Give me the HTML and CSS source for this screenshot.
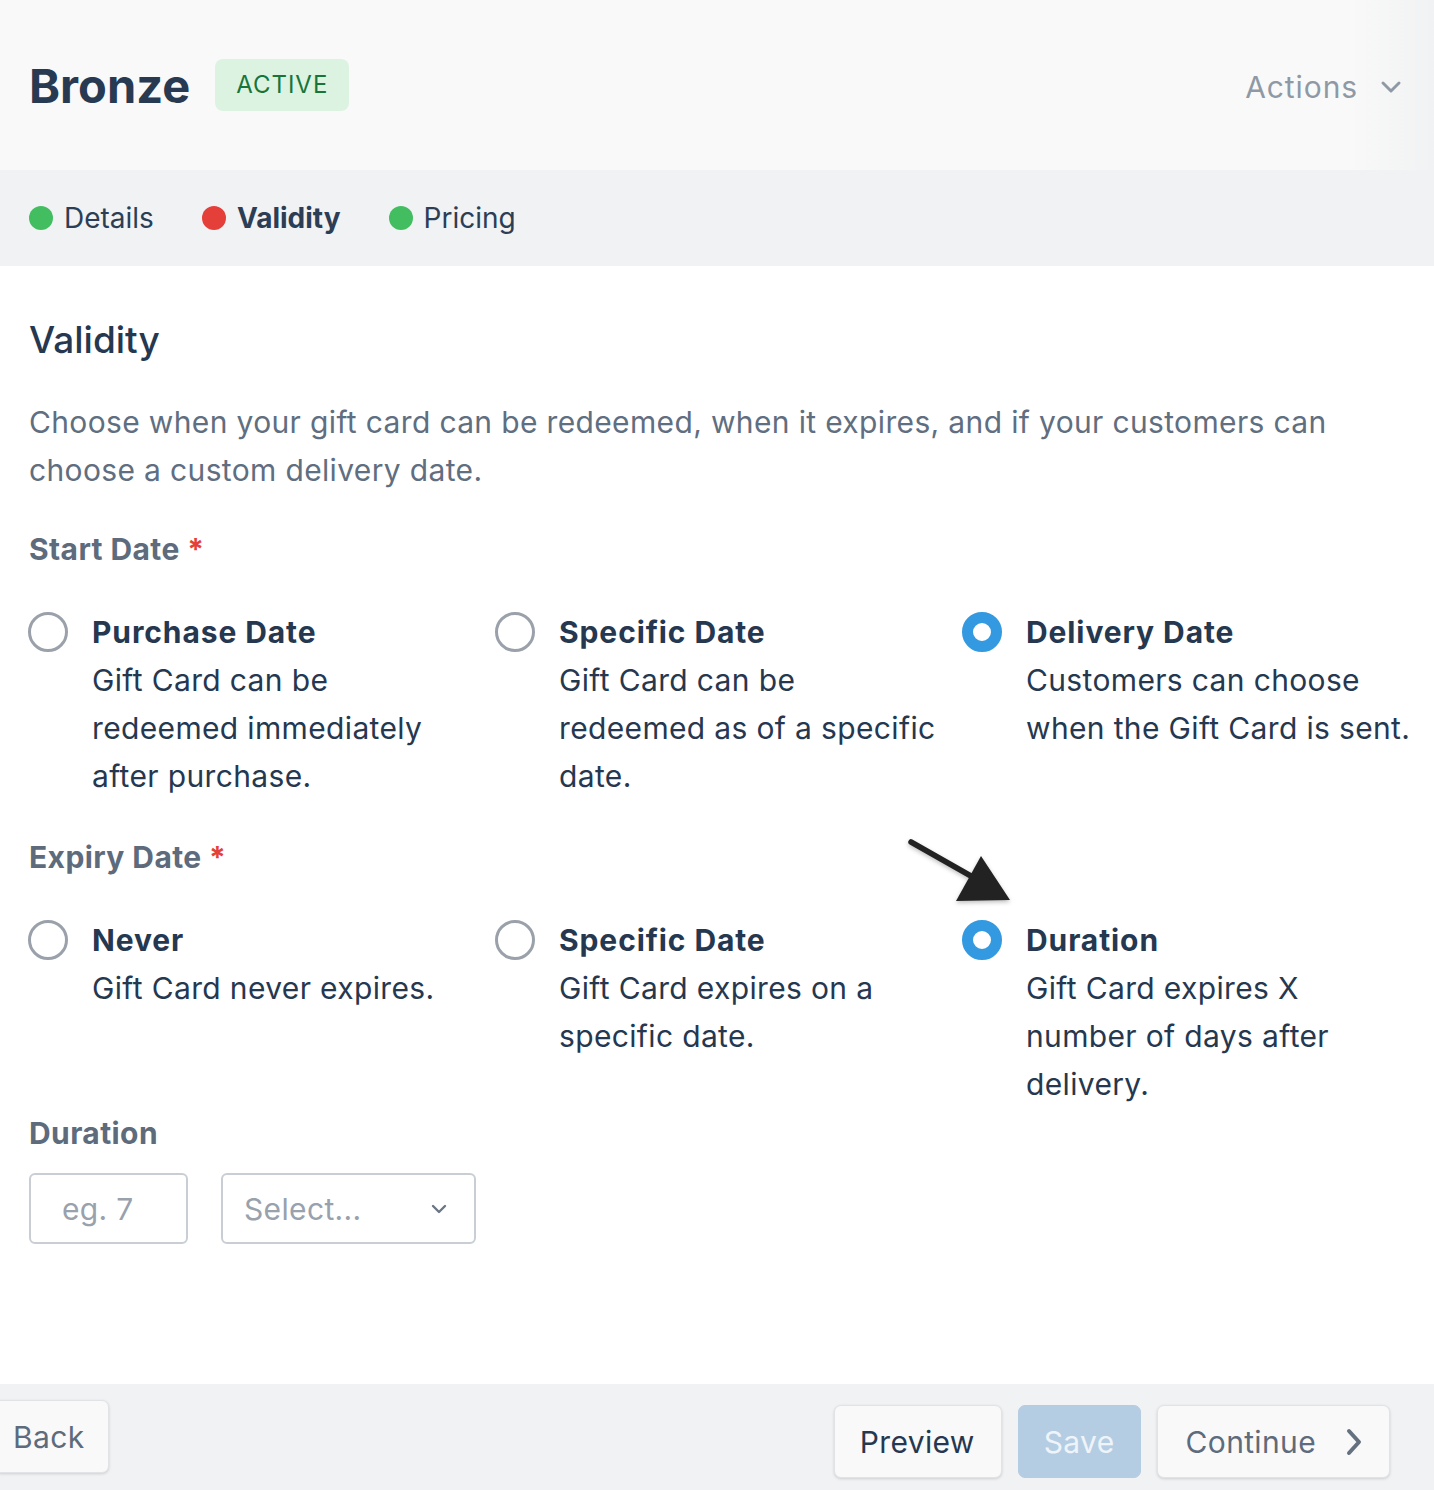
FILE: index.html
```html
<!DOCTYPE html>
<html lang="en">
<head>
  <meta charset="UTF-8" />
  <meta name="viewport" content="width=device-width, initial-scale=1.0" />
  <title>Bronze - Validity</title>
  <link rel="stylesheet" href="styles.css">
</head>
<body>
  <header class="page-header">
    <div class="title-group">
      <h1>Bronze</h1>
      <span class="badge">ACTIVE</span>
    </div>
    <button class="actions">Actions
      <svg width="22" height="14" viewBox="0 0 22 14"><path d="M3 3l8 8 8-8" fill="none" stroke="#8f99a6" stroke-width="3" stroke-linecap="round" stroke-linejoin="round"/></svg>
    </button>
  </header>

  <nav class="steps">
    <span class="step"><i class="dot green"></i>Details</span>
    <span class="step current"><i class="dot red"></i>Validity</span>
    <span class="step"><i class="dot green"></i>Pricing</span>
  </nav>

  <main class="content">
    <h2>Validity</h2>
    <p class="intro">Choose when your gift card can be redeemed, when it expires, and if your customers can choose a custom delivery date.</p>

    <h3 class="label">Start Date <span class="req">*</span></h3>
    <div class="options">
      <label class="option">
        <span class="radio"></span>
        <span class="option-text"><b>Purchase Date</b>Gift Card can be redeemed immediately after purchase.</span>
      </label>
      <label class="option">
        <span class="radio"></span>
        <span class="option-text"><b>Specific Date</b>Gift Card can be redeemed as of a specific date.</span>
      </label>
      <label class="option">
        <span class="radio checked"></span>
        <span class="option-text"><b>Delivery Date</b>Customers can choose when the Gift Card is sent.</span>
      </label>
    </div>

    <h3 class="label">Expiry Date <span class="req">*</span></h3>
    <div class="options">
      <label class="option">
        <span class="radio"></span>
        <span class="option-text"><b>Never</b>Gift Card never expires.</span>
      </label>
      <label class="option">
        <span class="radio"></span>
        <span class="option-text"><b>Specific Date</b>Gift Card expires on a specific date.</span>
      </label>
      <label class="option">
        <span class="radio checked"></span>
        <span class="option-text"><b>Duration</b>Gift Card expires X number of days after delivery.</span>
      </label>
    </div>

    <h3 class="label duration-label">Duration</h3>
    <div class="duration-row">
      <div class="field num">eg. 7</div>
      <div class="field select">Select...
        <svg width="18" height="12" viewBox="0 0 18 12"><path d="M3 3l6 6 6-6" fill="none" stroke="#6b7685" stroke-width="2.4" stroke-linecap="round" stroke-linejoin="round"/></svg>
      </div>
    </div>

    <!-- callout arrow pointing at the Duration option -->
    <svg class="pointer" width="120" height="80" viewBox="0 0 120 80">
      <line x1="5" y1="6" x2="72" y2="44" stroke="#222" stroke-width="5.5" stroke-linecap="round"/>
      <polygon points="104,64 50,65 75,20" fill="#222"/>
    </svg>
  </main>

  <footer class="footer">
    <button class="btn back">Back</button>
    <div class="footer-right">
      <button class="btn preview">Preview</button>
      <button class="btn save">Save</button>
      <button class="btn muted">Continue
        <svg width="20" height="30" viewBox="0 0 20 30"><path d="M5 4l10 11-10 11" fill="none" stroke="#667180" stroke-width="4" stroke-linecap="round" stroke-linejoin="round"/></svg>
      </button>
    </div>
  </footer>
</body>
</html>
```

FILE: styles.css
```css
* { box-sizing: border-box; }
body { margin: 0; height: 1490px; display: flex; flex-direction: column; font-family: Inter, "Noto Sans", sans-serif; letter-spacing: 0.35px; color: #263850; background: #fff; overflow: hidden; }
button { font-family: inherit; letter-spacing: inherit; cursor: pointer; }

.page-header { height: 170px; flex: none; display: flex; align-items: center; justify-content: space-between; padding: 0 32px 0 29px; background: linear-gradient(to right, #f9f9f9 94%, #f1f2f3); }
.title-group { display: flex; align-items: center; gap: 25px; }
h1 { margin: 0; font-size: 47px; font-weight: 700; color: #283a51; letter-spacing: 0; }
.badge { background: #dcf3e2; color: #17753a; font-size: 24px; letter-spacing: 1px; padding: 12px 21px; border-radius: 8px; line-height: 28px; }
.actions { background: none; border: 0; color: #8f99a6; font-size: 30px; display: flex; align-items: center; gap: 22px; padding: 0; margin-top: 3px; letter-spacing: 0.9px; }

.steps { height: 96px; flex: none; background: #f1f2f4; display: flex; align-items: center; gap: 48px; padding: 0 29px; font-size: 28px; color: #2c3e55; letter-spacing: 0; }
.step { display: flex; align-items: center; gap: 11px; }
.step.current { font-weight: 700; }
.dot { width: 24px; height: 24px; border-radius: 50%; display: inline-block; }
.dot.green { background: #42be60; }
.dot.red { background: #e53f3a; }

.content { flex: 1; position: relative; padding: 52px 10px 0 29px; }
h2 { margin: 0; font-size: 37px; font-weight: 500; line-height: 44px; color: #263850; letter-spacing: 0; }
.intro { margin: 36px 0 0; font-size: 30px; line-height: 48px; color: #5f6e80; max-width: 1340px; }
.label { margin: 35px 0 0; font-size: 30px; font-weight: 700; line-height: 40px; color: #5d6b7c; letter-spacing: 0.4px; }
.req { color: #e53f3a; }

.options { display: grid; grid-template-columns: 467px 467px 1fr; margin-top: 39px; }
.option { display: flex; gap: 24px; font-size: 30px; line-height: 48px; color: #263850; }
.option-text { max-width: 386px; }
.option-text b { display: block; font-weight: 700; letter-spacing: 0.9px; }
.radio { flex: none; width: 40px; height: 40px; margin-top: 4px; margin-left: -1px; border-radius: 50%; border: 3px solid #9aa1aa; }
.radio.checked { border: 11px solid #3399e0; }
.options + .label { margin-top: 37px; }
.options + .duration-label { margin-top: 5px; }

.duration-row { display: flex; gap: 33px; margin-top: 20px; }
.field { height: 71px; border: 2px solid #c9ced4; border-radius: 6px; font-size: 30px; color: #98a1ac; display: flex; align-items: center; }
.field.num { width: 159px; padding-left: 31px; }
.field.select { width: 255px; padding: 0 26px 0 21px; justify-content: space-between; }

.pointer { position: absolute; left: 906px; top: 570px; filter: drop-shadow(0 2px 2px rgba(0,0,0,0.25)); }

.footer { height: 106px; flex: none; background: #f1f2f4; display: flex; align-items: center; justify-content: space-between; padding: 0 44px 0 0; }
.btn { height: 73px; font-size: 30px; border: 1px solid #e1e3e6; border-radius: 7px; background: #f9f9f9; color: #263850; padding: 0 25px; box-shadow: 0 1px 3px rgba(0,0,0,0.15); display: flex; align-items: center; gap: 28px; }
.btn.back { margin-left: -6px; margin-top: -1px; color: #5d6b7c; padding: 0 24px 0 18px; }
.footer-right { display: flex; gap: 16px; margin-top: 9px; }
.btn.preview { padding: 0 26px 0 25px; }
.btn.save { background: #b5cde2; border-color: #b5cde2; color: #eef4f9; box-shadow: none; }
.btn.muted { color: #5d6b7c; padding-left: 28px; }
```
